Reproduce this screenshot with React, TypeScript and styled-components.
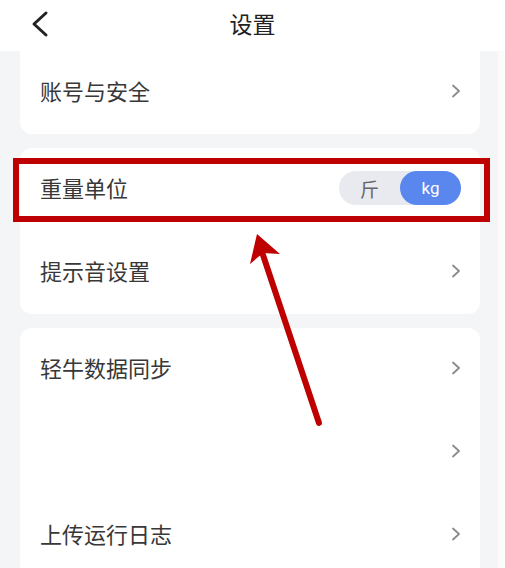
import React from "react";
import styled, { createGlobalStyle } from "styled-components";

const Global = createGlobalStyle`
  html, body { margin: 0; padding: 0; }
  body {
    background: #fbfbfc;
    font-family: "Noto Sans CJK SC", "Noto Sans", sans-serif;
    overflow: hidden;
    height: 568px;
  }
`;

const Screen = styled.div`
  position: relative;
  width: 505px;
  height: 568px;
  overflow: hidden;
`;

const Header = styled.header`
  height: 51px;
  background: #ffffff;
  display: flex;
  align-items: center;
  justify-content: center;
  position: relative;
`;

const BackButton = styled.div`
  position: absolute;
  left: 30px;
  top: 10px;
  width: 20px;
  height: 28px;
  display: flex;
  align-items: center;
  justify-content: center;
`;

const Title = styled.h1`
  margin: 0;
  font-size: 23px;
  font-weight: 400;
  color: #222222;
  line-height: 1;
  transform: translateY(-2px);
`;

const Content = styled.main`
  width: 498px;
  background: #f4f5f7;
  display: flex;
  flex-direction: column;
  gap: 14px;
  padding: 0 18px 0 20px;
  box-sizing: border-box;
  height: 517px;
`;

const Card = styled.section<{ $flatTop?: boolean }>`
  background: #ffffff;
  border-radius: ${(p) => (p.$flatTop ? "0 0 12px 12px" : "12px")};
  display: flex;
  flex-direction: column;
  flex-shrink: 0;
`;

const Row = styled.div`
  position: relative;
  height: 83px;
  box-sizing: border-box;
  display: flex;
  align-items: center;
  justify-content: space-between;
  padding: 0 19px 3px 20px;
`;

const Label = styled.span`
  font-size: 22px;
  color: #383838;
  line-height: 1;
  transform: translateY(-1px);
`;

const Highlight = styled.div`
  position: absolute;
  left: -7px;
  right: -10px;
  top: 10px;
  bottom: 9px;
  border: 6px solid #bf0000;
  pointer-events: none;
`;

const Toggle = styled.div`
  width: 122px;
  height: 34px;
  border-radius: 17px;
  background: #e9eaef;
  display: flex;
  align-items: center;
`;

const ToggleOption = styled.div<{ $active?: boolean }>`
  flex: 1;
  height: 34px;
  border-radius: 17px;
  display: flex;
  align-items: center;
  justify-content: center;
  background: ${(p) => (p.$active ? "#5a87ee" : "transparent")};
  color: ${(p) => (p.$active ? "#ffffff" : "#666666")};
  font-size: ${(p) => (p.$active ? "17px" : "19px")};
  font-family: ${(p) =>
    p.$active ? "Roboto, 'Noto Sans', sans-serif" : "'Noto Sans CJK SC', sans-serif"};
  line-height: 1;
`;

const Annotation = styled.svg`
  position: absolute;
  left: 0;
  top: 0;
  pointer-events: none;
`;

const Chevron = () => (
  <svg width="10" height="14" viewBox="0 0 10 14">
    <polyline
      points="2,1.5 8,7 2,12.5"
      fill="none"
      stroke="#8a8a8a"
      strokeWidth="1.8"
      strokeLinecap="round"
      strokeLinejoin="round"
    />
  </svg>
);

export default function App() {
  return (
    <Screen>
      <Global />
      <Header>
        <BackButton>
          <svg width="20" height="28" viewBox="0 0 20 28">
            <polyline
              points="16,3 4,14 16,25"
              fill="none"
              stroke="#222222"
              strokeWidth="3"
              strokeLinecap="round"
              strokeLinejoin="round"
            />
          </svg>
        </BackButton>
        <Title>设置</Title>
      </Header>
      <Content>
        <Card $flatTop>
          <Row>
            <Label>账号与安全</Label>
            <Chevron />
          </Row>
        </Card>
        <Card>
          <Row>
            <Label>重量单位</Label>
            <Toggle>
              <ToggleOption>斤</ToggleOption>
              <ToggleOption $active>kg</ToggleOption>
            </Toggle>
            <Highlight />
          </Row>
          <Row>
            <Label>提示音设置</Label>
            <Chevron />
          </Row>
        </Card>
        <Card>
          <Row>
            <Label>轻牛数据同步</Label>
            <Chevron />
          </Row>
          <Row>
            <Label />
            <Chevron />
          </Row>
          <Row>
            <Label>上传运行日志</Label>
            <Chevron />
          </Row>
        </Card>
      </Content>
      <Annotation width="505" height="568" viewBox="0 0 505 568">
        <line
          x1="262"
          y1="252"
          x2="319"
          y2="423"
          stroke="#bf0000"
          strokeWidth="6"
          strokeLinecap="round"
        />
        <polygon points="257,234 280,254 263,253 250,264" fill="#bf0000" />
      </Annotation>
    </Screen>
  );
}
